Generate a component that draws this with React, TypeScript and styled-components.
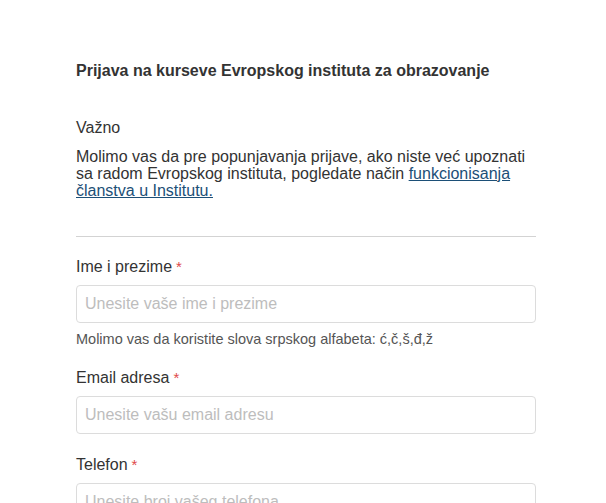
import React, { FC } from 'react';
import styled, { createGlobalStyle } from 'styled-components';

const GlobalStyle = createGlobalStyle`
    body {
        margin: 0;
        background: #fff;
        font-family: 'Liberation Sans', Arial, sans-serif;
        color: #333;
    }
`;

const Page = styled.div`
    padding: 61px 0 0 76px;
    width: 460px;
`;

const Title = styled.h1`
    margin: 0;
    font-size: 16px;
    line-height: 20px;
    font-weight: bold;
    color: #333;
`;

const Notice = styled.section`
    margin-top: 38px;
`;

const NoticeHeading = styled.div`
    font-size: 16px;
    line-height: 18px;
`;

const NoticeText = styled.p`
    margin: 11px 0 0;
    font-size: 16px;
    line-height: 17px;
`;

const Link = styled.a`
    color: #1c4f77;
    text-decoration: underline;
`;

const Divider = styled.hr`
    margin: 37px 0 21px;
    border: none;
    border-top: 1px solid #d3d3d3;
`;

const Field = styled.div`
    margin-bottom: 22px;
`;

const Label = styled.label`
    display: block;
    font-size: 16px;
    line-height: 18px;
    margin-bottom: 9px;
`;

const Required = styled.span`
    color: #e04848;
    font-size: 15px;
    margin-left: 4px;
`;

const Input = styled.input`
    display: block;
    box-sizing: border-box;
    width: 100%;
    height: 38px;
    padding: 0 8px;
    border: 1px solid #dcdcdc;
    border-radius: 4px;
    font-family: 'Liberation Sans', Arial, sans-serif;
    font-size: 16px;
    color: #333;
    outline: none;
    &::placeholder {
        color: #bdbdbd;
    }
`;

const Help = styled.div`
    margin: 8px 0 1px;
    font-size: 14.5px;
    line-height: 16px;
    color: #555;
`;

type FieldProps = {
    label: string;
    placeholder: string;
    help?: string;
};

const FormField: FC<FieldProps> = ({ label, placeholder, help }) => (
    <Field>
        <Label>
            {label}
            <Required>*</Required>
        </Label>
        <Input placeholder={placeholder} />
        {help && <Help>{help}</Help>}
    </Field>
);

const App: FC = () => (
    <>
        <GlobalStyle />
        <Page>
            <Title>Prijava na kurseve Evropskog instituta za obrazovanje</Title>
            <Notice>
                <NoticeHeading>Važno</NoticeHeading>
                <NoticeText>
                    Molimo vas da pre popunjavanja prijave, ako niste već upoznati sa radom Evropskog
                    instituta, pogledate način <Link href="#">funkcionisanja članstva u Institutu.</Link>
                </NoticeText>
            </Notice>
            <Divider />
            <FormField
                label="Ime i prezime"
                placeholder="Unesite vaše ime i prezime"
                help="Molimo vas da koristite slova srpskog alfabeta: ć,č,š,đ,ž"
            />
            <FormField label="Email adresa" placeholder="Unesite vašu email adresu" />
            <FormField label="Telefon" placeholder="Unesite broj vašeg telefona" />
        </Page>
    </>
);

export default App;
